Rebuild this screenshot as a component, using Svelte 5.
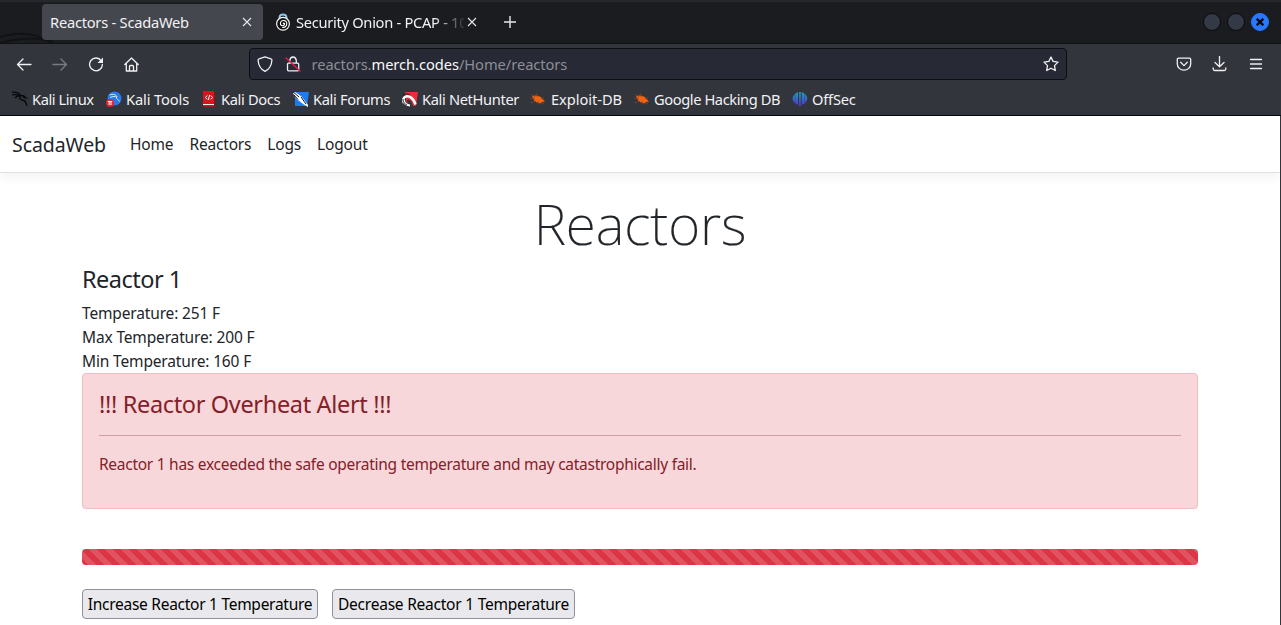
<script>
  const bookmarks = [
    ['kali', 'Kali Linux'], ['tools', 'Kali Tools'], ['docs', 'Kali Docs'], ['forums', 'Kali Forums'],
    ['hunter', 'Kali NetHunter'], ['bug', 'Exploit-DB'], ['bug', 'Google Hacking DB'], ['offsec', 'OffSec']
  ];
  const links = ['Home', 'Reactors', 'Logs', 'Logout'];
  const readings = [['Temperature', 251], ['Max Temperature', 200], ['Min Temperature', 160]];
</script>

{#snippet close()}
  <svg class="close" width="10" height="10" viewBox="0 0 10 10"><path d="M1 1l8 8M9 1L1 9" /></svg>
{/snippet}

{#snippet favicon(kind)}
  <svg width="16" height="16" viewBox="0 0 16 16">
    {#if kind === 'kali'}
      <path d="M0 1.200C4 .8 7 2 8.500 4.200M.5 4C4 2.500 6 3.500 8 5M3 7C4.500 5 7 4.500 9 5M8 4.500l3.500.3L14 7l-3-.6M8.200 5c-1.200 3 1 4 3 4.300 2 .4 3 2 3.600 5.500" fill="none" stroke="#08090b" stroke-width="1.400" />
    {:else if kind === 'tools'}
      <circle cx="8.500" cy="7.500" r="7" fill="#2878f0" />
      <path d="M3.500 4C7 2.500 10 3.500 11 6M4 6.500C7 5 9.500 5.500 10.500 6c-.5 2.500 2 2 3 4.500" fill="none" stroke="#dcecff" />
      <circle cx="4" cy="12" r="4" fill="#e22330" /><path d="M1.800 10.500h4.400M3.200 10.500v3.500M5 10.500v3.500" stroke="#fff" />
    {:else if kind === 'docs'}
      <path d="M0 0h11v13H0z" fill="#d8141c" /><path d="M11 0h1v15h-1z" fill="#901018" /><path d="M0 13h11v1.300H0z" fill="#eee" /><path d="M0 14.300h12V16H0z" fill="#b01018" />
      <path d="M4.200 4.500L2.500 6.500l1.700 2M7.800 4.500l1.700 2-1.700 2M6.600 4l-1.200 5" fill="none" stroke="#fff" />
    {:else if kind === 'forums'}
      <path d="M2 1h14l-2 14H2z" fill="#1e7cf2" />
      <path d="M0 2l2-1 3 2 4 3 3 4 3 4v2l-5-3-5-4-3-3z" fill="#fff" />
      <path d="M0 .8l6 5.200M1 4l4 4.500M8 6l5 7" stroke="#15171b" fill="none" />
    {:else if kind === 'hunter'}
      <path d="M3 1h13l-2 14H5z" fill="#f02b38" />
      <path d="M5 9q4-2 6 6H6z" fill="#33353d" />
      <path d="M2 12C0 7 3 4.500 7 5.500c3 1 5 3.500 6.500 8" stroke="#fff" stroke-width="2.600" fill="none" /><path d="M2 9c0 3 2 5 6 5.500" stroke="#fff" stroke-width="2" fill="none" />
      <path d="M1 4.500c2-2 5-2 7-.5M1 8c-.5 3 2 5 4 6" stroke="#15171b" stroke-width=".9" fill="none" />
    {:else if kind === 'bug'}
      <path d="M2 5l4-.5 4 1 3 3 2 2-3 .5-1 1.500-4-1-3-2z" fill="#f26210" />
      <path d="M1 3l4 3M0 7l5 1M1 12l4-2M6 2l2 4M9 13.500l-1-3M14 7h-3M14 13l-3-2" stroke="#7c4730" stroke-width=".8" />
    {:else}
      <defs><linearGradient id="off" x2="0" y2="1"><stop stop-color="#16a5ba" /><stop offset="1" stop-color="#5b2adb" /></linearGradient></defs>
      <path d="M6 1v13Q1 12 .5 7.500 1 3 6 1zM9.800 1q5 2 5.500 6.500-.5 4.500-5.500 6.500zM7.100 1h1.700v14.500H7.100z" fill="url(#off)" />
      <path d="M3 2v11M12.700 2v11" stroke="#33353d" stroke-width=".4" />
    {/if}
  </svg>
{/snippet}

<div class="window">
  <header class="tabs">
    <svg class="wallpaper" width="90" height="42" viewBox="0 0 90 42"><path d="M0 35q28-8 46 3l8 4M0 41q30-8 52-2" /></svg>
    <div class="tab active"><span>Reactors - ScadaWeb</span>{@render close()}</div>
    <div class="tab onion">
      <svg width="16" height="18" viewBox="0 0 16 18"><path d="M4.500 6V4Q5 1.500 8 1.500T11.500 4v2" fill="none" stroke="#91c6ef" stroke-width="1.800" /><circle cx="8" cy="10.800" r="6.400" fill="#111" stroke="#f5f5f5" stroke-width="1.200" /><path d="M8 10.800q1-1.300 1.600 0c0 2.700-4.200 2.500-4.200-.3 0-4.300 6.400-3.600 6.400.3 0 2.700-2.300 4-4.600 3.700" fill="none" stroke="#fff" stroke-width="1.100" /></svg>
      <span class="fade">Security Onion - PCAP - 10</span>{@render close()}
    </div>
    <svg class="plus" width="12" height="12" viewBox="0 0 12 12"><path d="M6 0v12M0 6h12" /></svg>
    <div class="controls"><i></i><i></i><i class="blue"><svg width="8" height="8" viewBox="0 0 8 8"><path d="M.7.700l6.600 6.600M7.300.7L.7 7.300" /></svg></i></div>
  </header>

  <div class="toolbar">
    <div class="nav-icons">
      <svg width="16" height="16" viewBox="0 0 16 16"><path d="M15 8.500H1.500M7 3L1.500 8.500 7 14" /></svg>
      <svg class="dim" width="16" height="16" viewBox="0 0 16 16"><path d="M1 8.500h13.500M9 3l5.500 5.500L9 14" /></svg>
      <svg width="16" height="16" viewBox="0 0 16 16"><path d="M13.300 4.800A6.400 6.400 0 1 0 14.400 8.500" /><path d="M15 1.500V7H9.500z" class="solid" /></svg>
      <svg width="16" height="16" viewBox="0 0 16 16"><path d="M.8 8.500L7.500 2l6.700 6.500M2.300 7.500V15h10.400V7.500M5.500 15v-4.500q0-1 1-1h2q1 0 1 1V15" /></svg>
    </div>
    <div class="address">
      <svg width="16" height="16" viewBox="0 0 16 16"><path d="M8 .8l6 2q1 .3.900 1.400-.5 8-6.900 11.200Q1.600 12.200 1.100 4.200 1 3.100 2 2.800z" /></svg>
      <svg width="16" height="16" viewBox="0 0 16 16"><path d="M4.800 7V4.300Q5.200 1 8 1t3.300 3.300V7M3.500 7.200h9.200q1 0 1 1v5.600q0 1-1 1H3.500q-1 0-1-1V8.200q0-1 1-1z" /><path d="M1 2l14 13" class="slash" /></svg>
      <span class="url">reactors.<b>merch.codes</b>/Home/reactors</span>
      <svg width="16" height="16" viewBox="0 0 16 16"><path d="M8 1l2.100 4.400 4.900.7-3.500 3.500.8 4.900L8 12.200l-4.300 2.300.8-4.900L1 6.100l4.900-.7z" /></svg>
    </div>
    <div class="actions">
      <svg width="16" height="16" viewBox="0 0 16 16"><path d="M2.500 2.200h11q1.200 0 1.200 1.200V8a6.700 6.200 0 0 1-13.400 0V3.400Q1.300 2.200 2.500 2.200zM4.700 6.300L8 9.600l3.300-3.300" /></svg>
      <svg width="16" height="16" viewBox="0 0 16 16"><path d="M7.500.5v10M3 6.500l4.500 4.200L12 6.500M1.200 12v1q0 1.500 1.500 1.500h9.600q1.500 0 1.500-1.500v-1" /></svg>
      <svg width="16" height="16" viewBox="0 0 16 16"><path d="M2.500 3.500h11M2.500 8h11M2.500 12.500h11" /></svg>
    </div>
  </div>

  <div class="bookmarks">
    {#each bookmarks as [kind, name], i}
      <div class="bookmark b{i}">{@render favicon(kind)}<span>{name}</span></div>
    {/each}
  </div>

  <main>
    <nav><strong>ScadaWeb</strong>{#each links as link}<a href="#{link}">{link}</a>{/each}</nav>
    <section class="container">
      <h1>Reactors</h1>
      <h2>Reactor 1</h2>
      <div class="readings">{#each readings as [label, value]}<div>{label}: {value} F</div>{/each}</div>
      <div class="alert">
        <h3>!!! Reactor Overheat Alert !!!</h3>
        <hr />
        <p>Reactor 1 has exceeded the safe operating temperature and may catastrophically fail.</p>
      </div>
      <div class="progress"></div>
      <div class="buttons"><button>Increase Reactor 1 Temperature</button><button>Decrease Reactor 1 Temperature</button></div>
    </section>
  </main>
</div>

<style>
  :global(body) { margin: 0; overflow: hidden; }
  * { box-sizing: border-box; }
  .window { height: 625px; overflow: hidden; background: #33353d; font: 14.67px "Noto Sans", sans-serif; color: #f2f2f4; white-space: nowrap; }
  svg { flex: none; }
  .tabs { height: 44px; background: #1b1c20; border-top: 2px solid #25272d; border-bottom: 1px solid #111216; display: flex; align-items: center; padding: 0 12px 2px 42px; position: relative; }
  .wallpaper { position: absolute; left: 0; top: 0; fill: none; stroke: #111216; stroke-width: 2; }
  .tab { position: relative; height: 36px; display: flex; align-items: center; }
  .tab.active { width: 221px; background: #45474e; border-radius: 4px; padding: 0 11px 0 8px; justify-content: space-between; letter-spacing: -.24px; }
  .onion { width: 215px; padding-left: 12px; letter-spacing: -.29px; }
  .onion span { width: 168px; margin-left: 5px; overflow: hidden; }
  .fade { mask-image: linear-gradient(90deg, #000 82%, transparent 102%); }
  .close, .plus { stroke: #e8e8ec; fill: none; stroke-width: 1.100; }
  .onion .close { margin-left: 3px; }
  .plus { margin-left: 26px; stroke-width: 1.400; }
  .controls { margin-left: auto; display: flex; gap: 6px; }
  .controls i { width: 18px; height: 18px; border-radius: 50%; background: #343946; border: 1px solid #090a0d; display: grid; place-items: center; }
  .controls .blue { background: #2777ff; border-color: #2777ff; }
  .controls svg { stroke: #07090d; stroke-width: 2.300; }
  .toolbar { height: 40px; display: flex; align-items: center; padding-left: 16px; }
  .toolbar svg { fill: none; stroke: #f0f0f2; stroke-width: 1.300; stroke-linejoin: round; stroke-linecap: round; }
  .toolbar svg.dim { stroke: #797b82; }
  .toolbar .solid { fill: #f0f0f2; stroke: none; }
  .toolbar .slash { stroke: #e21b4b; stroke-width: 1.500; }
  .nav-icons { display: flex; gap: 20px; width: 233px; }
  .address { width: 818px; height: 32px; background: #272934; border: 1px solid #0d0e12; border-radius: 4px; display: flex; align-items: center; padding: 0 7px; }
  .address svg:nth-child(2) { margin-left: 12px; }
  .url { margin-left: 10.500px; flex: 1; color: #8d8f98; letter-spacing: -.05px; }
  .url b { font-weight: 400; color: #fafafa; }
  .actions { display: flex; gap: 20px; margin-left: 109px; }
  .bookmarks { height: 32px; border-bottom: 1px solid #08090c; padding: 0 0 2px 12px; display: grid; grid-template-columns: 94px 97px 90px 109px 128px 104px 158px 70px; align-items: center; }
  .bookmark { display: flex; align-items: center; gap: 4px; letter-spacing: -.35px; }
  .b0 { letter-spacing: -.43px; }
  .b1 { letter-spacing: -.12px; }
  .b7 { letter-spacing: -.2px; }
  .b6 { letter-spacing: -.41px; }
  .b2 { gap: 2px; }
  .b5 { gap: 5px; letter-spacing: -.05px; }
  main { width: 1280px; height: 509px; background: #fff; color: #212529; font-size: 15.500px; line-height: 24px; }
  nav { height: 57px; border-bottom: 1px solid #dee2e6; box-shadow: 0 4px 12px rgba(0,0,0,.05); display: flex; align-items: center; gap: 16px; padding: 0 12px; }
  nav strong { font-size: 19.500px; font-weight: 400; margin-right: 8px; letter-spacing: -.08px; padding-top: 2px; }
  nav a { color: inherit; text-decoration: none; letter-spacing: -.18px; }
  .container { width: 1116px; margin-left: 82px; }
  h1, h2, h3, p { margin: 0; font-weight: 400; }
  h1 { font-size: 55px; line-height: 67px; padding-top: 17px; text-align: center; font-weight: 200; letter-spacing: -.1px; -webkit-text-stroke: .2px #212529; }
  h2 { font-size: 23.500px; line-height: 29px; margin: 8px 0 7px; letter-spacing: -.5px; }
  .readings { letter-spacing: -.15px; }
  .alert { height: 136px; padding: 16px; background: #f8d7da; border: 1px solid #f1bcc2; border-radius: 4px; color: #842029; }
  h3 { font-size: 23.500px; line-height: 29px; letter-spacing: -.34px; }
  hr { border: 0; border-top: 1px solid #cf9fa5; margin: 16px 0; }
  p { letter-spacing: -.27px; }
  .progress { height: 16px; margin-top: 40px; border-radius: 4px; background-color: #dc3545; background-image: linear-gradient(45deg, rgba(255,255,255,.15) 25%, transparent 25%, transparent 50%, rgba(255,255,255,.15) 50%, rgba(255,255,255,.15) 75%, transparent 75%); background-size: 16px 16px; background-position: 6px 0; }
  .buttons { display: flex; gap: 14px; margin-top: 24px; }
  button { font: 15.500px/24px "Noto Sans", sans-serif; letter-spacing: -.27px; width: 236px; height: 30px; padding: 0; border: 1px solid #8f8f9d; border-radius: 4px; background: #e9e9ed; color: #000; }
  button + button { width: 243px; letter-spacing: -.23px; }
</style>
